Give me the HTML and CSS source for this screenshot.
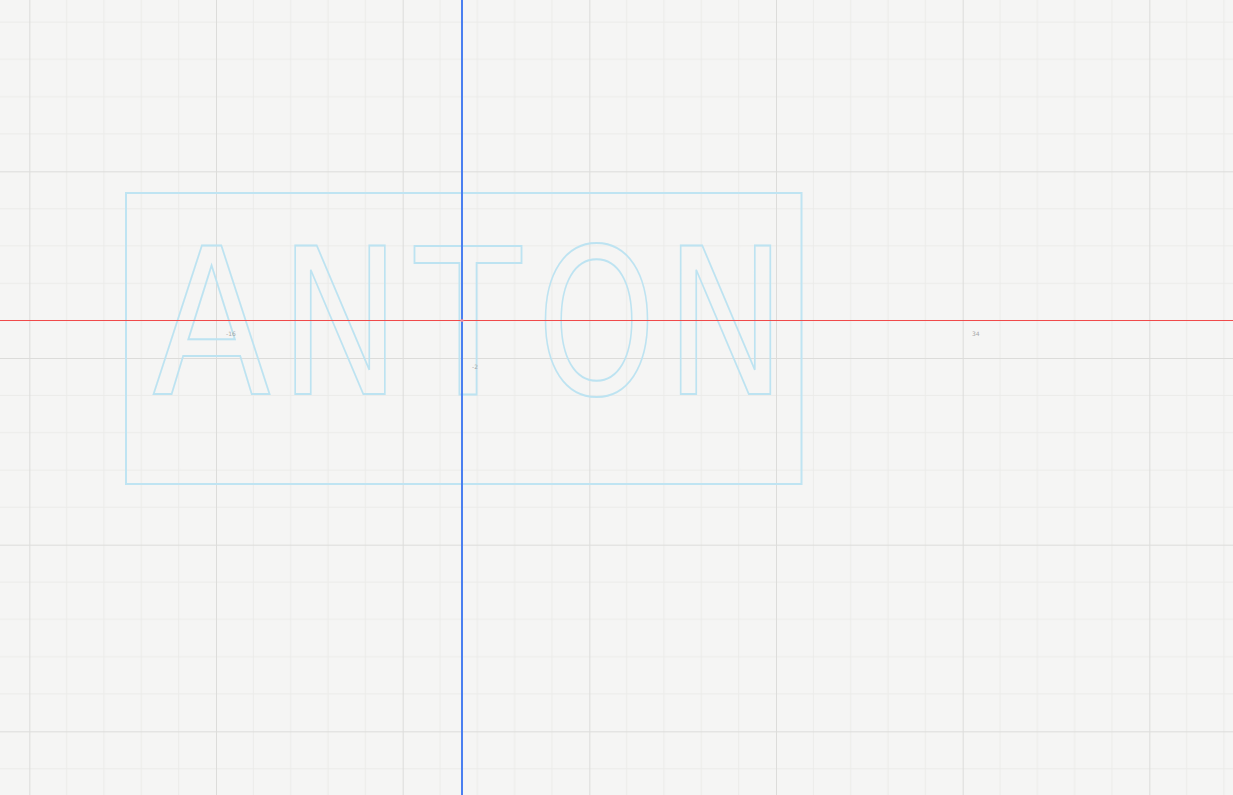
FILE: index.html
```html
<!DOCTYPE html>
<html>
<head>
<meta charset="utf-8">
<link rel="stylesheet" href="styles.css">
</head>
<body>
<svg class="canvas" width="1233" height="795" viewBox="0 0 1233 795">
  <defs>
    <pattern id="grid" x="29.333" y="171.333" width="186.667" height="186.667" patternUnits="userSpaceOnUse">
      <path class="minor" d="M37.333 0V186.667M74.667 0V186.667M112 0V186.667M149.333 0V186.667M0 37.333H186.667M0 74.667H186.667M0 112H186.667M0 149.333H186.667"/>
      <path class="major" d="M0.5 0V186.667M0 0.5H186.667"/>
    </pattern>
  </defs>
  <rect class="bg" x="0" y="0" width="1233" height="795"/>
  <rect x="0" y="0" width="1233" height="795" fill="url(#grid)"/>

  <rect class="frame" x="126" y="193" width="675.5" height="291"/>

  <g class="word">
    <text class="glyph" text-anchor="middle" transform="translate(211.5 394) scale(0.855 1)">A</text>
    <text class="glyph" text-anchor="middle" transform="translate(340 394) scale(0.8 1)">N</text>
    <text class="glyph" text-anchor="middle" transform="translate(468 394) scale(0.855 1)">T</text>
    <text class="glyph" text-anchor="middle" transform="translate(596.5 394) scale(0.745 1)">O</text>
    <text class="glyph" text-anchor="middle" transform="translate(725.5 394) scale(0.8 1)">N</text>
  </g>

  <line class="axis-x" x1="0" y1="320.5" x2="1233" y2="320.5"/>
  <line class="axis-y" x1="462" y1="0" x2="462" y2="795"/>
  <circle class="origin" cx="462" cy="320.5" r="1.5"/>

  <text class="tick" x="226" y="336">-16</text>
  <text class="tick" x="472" y="369">-2</text>
  <text class="tick" x="972" y="336">34</text>
</svg>
</body>
</html>
```

FILE: styles.css
```css
html, body {
  margin: 0;
  padding: 0;
  background: #f5f5f4;
  overflow: hidden;
}

.canvas {
  display: block;
}

.bg {
  fill: #f5f5f4;
}

.minor {
  stroke: #ebebe9;
  stroke-width: 1;
  fill: none;
}

.major {
  stroke: #dcdcda;
  stroke-width: 1;
  fill: none;
}

.frame {
  fill: none;
  stroke: #bfe4f2;
  stroke-width: 2;
}

.glyph {
  font-family: "DejaVu Sans", sans-serif;
  font-size: 203px;
  fill: none;
  stroke: #bde3f1;
  stroke-width: 2;
}

.axis-x {
  stroke: #f04a4a;
  stroke-width: 1;
}

.axis-y {
  stroke: #4a7ff0;
  stroke-width: 2;
}

.origin {
  fill: #e48ca0;
}

.tick {
  font-family: "DejaVu Sans", sans-serif;
  font-size: 6px;
  fill: #a8a8a8;
}
```
